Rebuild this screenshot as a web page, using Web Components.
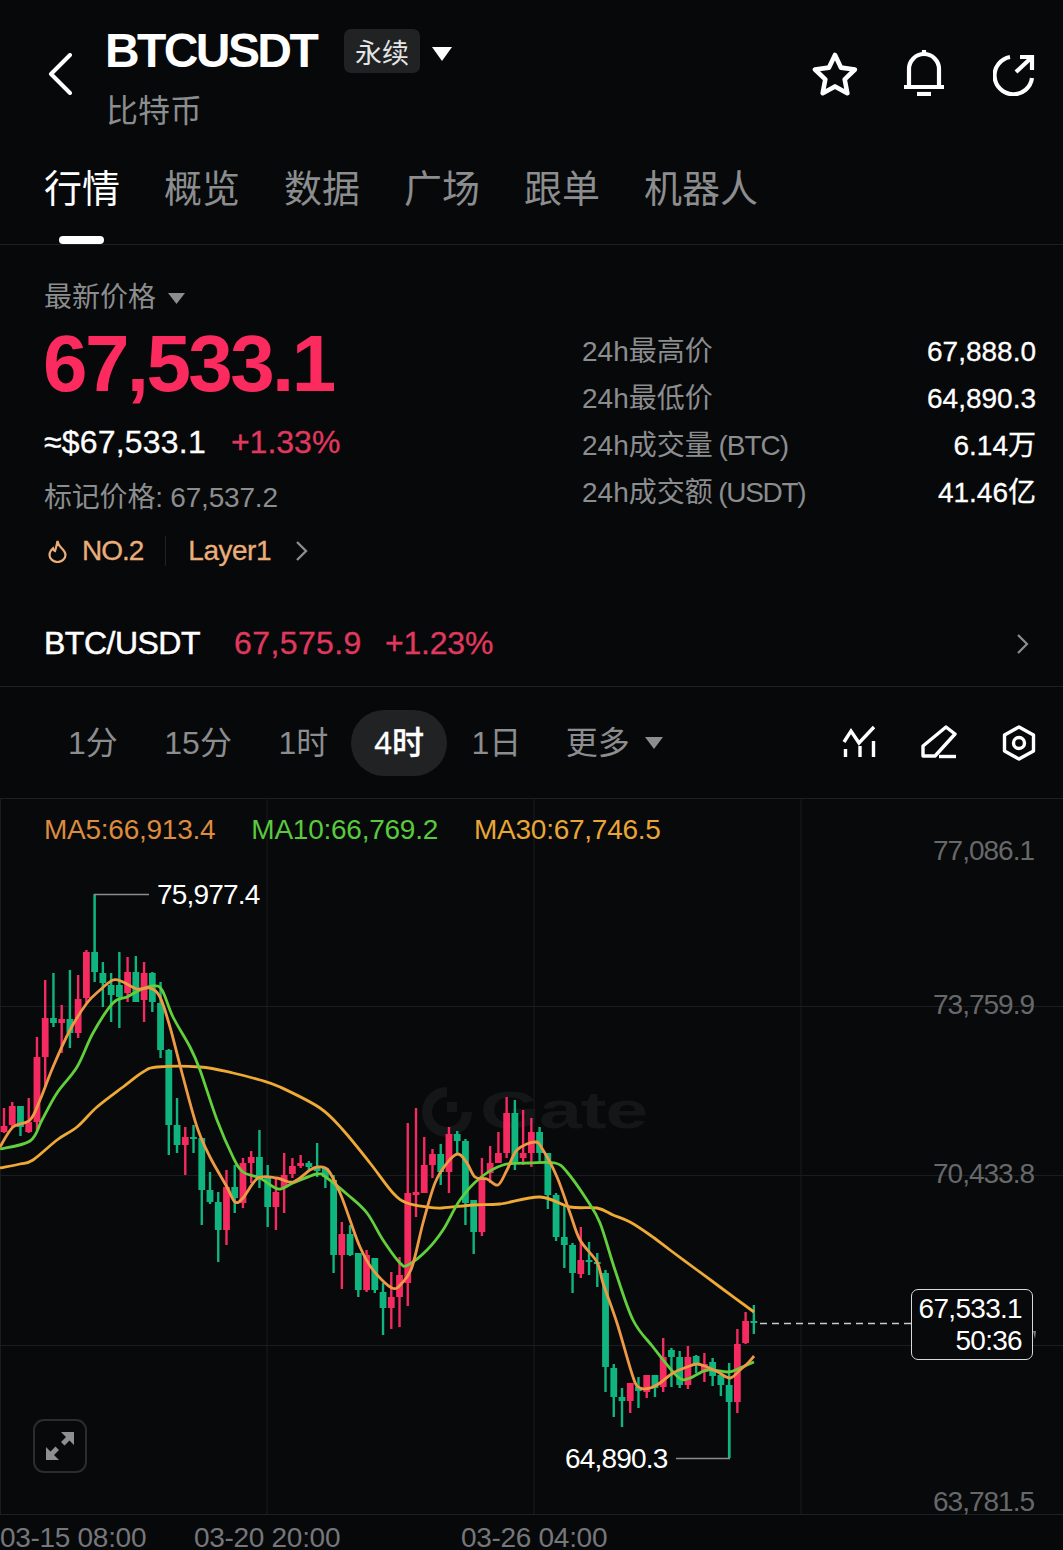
<!DOCTYPE html>
<html lang="zh">
<head>
<meta charset="utf-8">
<title>BTCUSDT</title>
<style>
  html, body { margin: 0; background: #070809; }
  body {
    width: 1063px;
    height: 1550px;
    overflow: hidden;
    display: flex;
    flex-direction: column;
    color: #fff;
    font-family: "Liberation Sans", "Noto Sans CJK SC", sans-serif;
  }
</style>
</head>
<body>
  <gt-header></gt-header>
  <gt-tabs></gt-tabs>
  <gt-price></gt-price>
  <gt-spot-row></gt-spot-row>
  <gt-intervals></gt-intervals>
  <gt-chart></gt-chart>
  <gt-time-axis></gt-time-axis>

<script>
class GtHeader extends HTMLElement {
  constructor() {
    super();
    this.attachShadow({ mode: "open" }).innerHTML = `
      <style>
        :host { display: flex; height: 150px; padding: 23px 28px 0 48px; box-sizing: border-box; flex: none; }
        .back { margin: 30px 34px 0 0; flex: none; }
        .title { display: flex; align-items: center; height: 56px; }
        .sym { font-size: 48px; font-weight: 700; letter-spacing: -2.6px; line-height: 56px; width: 239px; margin-left: -1px; }
        .badge { width: 76px; height: 44px; background: #202223; border-radius: 7px; color: #e4e5e6; font-size: 27px;
          display: flex; align-items: center; justify-content: center; }
        .caret { margin: 6px 0 0 12px; }
        .sub { font-size: 32px; color: #8b8d8f; line-height: 40px; margin-top: 12px; }
        .icons { margin-left: auto; display: flex; align-items: flex-start; gap: 47px; padding-top: 27px; }
        svg { display: block; }
      </style>
      <svg class="back" width="24" height="42" viewBox="0 0 24 42" fill="none" stroke="#fff" stroke-width="4" stroke-linecap="round" stroke-linejoin="round"><path d="M22 2 3 21l19 19"/></svg>
      <div>
        <div class="title">
          <span class="sym">BTCUSDT</span>
          <span class="badge">永续</span>
          <svg class="caret" width="20" height="14" viewBox="0 0 20 14"><path d="M0 0h20L10 14z" fill="#fff"/></svg>
        </div>
        <div class="sub">比特币</div>
      </div>
      <div class="icons">
        <svg style="margin:2px -1px 0 0" width="46" height="44" viewBox="0 0 46 44" fill="none" stroke="#fff" stroke-width="4.6" stroke-linejoin="round"><path d="M23 3l5.900 12.600 14 1.900-10.200 9.800 2.600 13.900L23 34.400l-12.300 6.800 2.600-13.900L3 17.500l14-1.900z"/></svg>
        <svg width="40" height="46" viewBox="0 0 40 46" fill="none" stroke="#fff" stroke-width="4.2"><path d="M5 36V19a15 15 0 0 1 30 0v17"/><path d="M0 37h40"/><path d="M20 0v5"/><path d="M13 44h14"/></svg>
        <svg style="margin:4px 0 0 2px" width="42" height="42" viewBox="993 54 42 42" fill="none" stroke="#fff" stroke-width="4.2"><path d="M1010 57a18.800 18.800 0 1 0 22 21"/><path d="M1016 72l15-14"/><path d="M1020 57h12v13"/></svg>
      </div>`;
  }
}

class GtTabs extends HTMLElement {
  constructor() {
    super();
    const names = ["行情", "概览", "数据", "广场", "跟单", "机器人"];
    this.attachShadow({ mode: "open" }).innerHTML = `
      <style>
        :host { display: flex; gap: 44px; height: 95px; padding-left: 44px; box-sizing: border-box; border-bottom: 1px solid #1f2022; flex: none; }
        span { font-size: 38px; line-height: 78px; color: #8b8d8f; position: relative; height: 94px; }
        .on { color: #fff; }
        .on::after { content: ""; position: absolute; left: 15px; width: 45px; height: 8px; bottom: 0; background: #fff; border-radius: 4px; }
      </style>
      ${names.map((n, i) => `<span class="${i ? "" : "on"}">${n}</span>`).join("")}`;
  }
}

class GtStat extends HTMLElement {
  constructor() {
    super();
    this.attachShadow({ mode: "open" }).innerHTML = `
      <style>
        :host { display: flex; justify-content: space-between; height: 47px; line-height: 47px; font-size: 28px; }
        .k { color: #8b8d8f; }
        .v { color: #fff; -webkit-text-stroke: .3px #fff; }
      </style>
      <span class="k"><slot name="k"></slot></span>
      <span class="v"><slot name="v"></slot></span>`;
  }
}

class GtPrice extends HTMLElement {
  constructor() {
    super();
    this.attachShadow({ mode: "open" }).innerHTML = `
      <style>
        :host { display: grid; grid-template-columns: 538px 1fr; padding: 35px 27px 30px 44px; flex: none; height: 354px; box-sizing: border-box; }
        .label { display: flex; align-items: center; gap: 12px; font-size: 28px; line-height: 36px; color: #8b8d8f; }
        .big { font-size: 80px; font-weight: 700; line-height: 84px; letter-spacing: -2.6px; color: #fb2b5f; margin: 6px 0 0 -1px; }
        .sub { display: flex; font-size: 32px; line-height: 40px; margin-top: 16px; -webkit-text-stroke: .3px; }
        .usd { letter-spacing: .2px; margin-right: 25px; }
        .chg { color: #e0395f; }
        .mark { font-size: 28px; line-height: 36px; color: #8b8d8f; margin-top: 18px; letter-spacing: -.2px; }
        .tag { display: flex; align-items: center; font-size: 28px; line-height: 36px; color: #eaae7a; margin-top: 17px; -webkit-text-stroke: .3px; }
        .no { letter-spacing: -1px; }
        .layer { letter-spacing: -.5px; }
        .sep { width: 1px; height: 30px; background: #222325; margin: 0 22px; }
        .stats { padding-top: 48px; }
        svg { display: block; flex: none; }
      </style>
      <div>
        <div class="label">最新价格<svg width="17" height="11" viewBox="0 0 17 11"><path d="M0 0h17L8.500 11z" fill="#8b8d8f"/></svg></div>
        <div class="big">67,533.1</div>
        <div class="sub"><span class="usd">≈$67,533.1</span><span class="chg">+1.33%</span></div>
        <div class="mark">标记价格: 67,537.2</div>
        <div class="tag">
          <svg style="margin:0 14px 0 3px" width="21" height="24" viewBox="0 0 21 24" fill="none" stroke="#eaae7a" stroke-width="2.2"><path d="M10.500 2c.5 4 2 5 4.500 7.500 2.300 2.300 3.500 4.300 3.500 6.500a8 7 0 0 1-16 0c0-3 1.700-5.200 3.500-6.800.4 1.600 1 2.300 2 2.800 1.200-3 1.700-6.500 2.500-10z"/></svg>
          <span class="no">NO.2</span><i class="sep"></i><span class="layer">Layer1</span>
          <svg style="margin-left:24px" width="13" height="22" viewBox="0 0 13 22" fill="none" stroke="#8b8d8f" stroke-width="2.4"><path d="M2 2l9 9-9 9"/></svg>
        </div>
      </div>
      <div class="stats">
        <gt-stat><span slot="k">24h最高价</span><span slot="v">67,888.0</span></gt-stat>
        <gt-stat><span slot="k">24h最低价</span><span slot="v">64,890.3</span></gt-stat>
        <gt-stat><span slot="k">24h成交量<span style="letter-spacing:-1px;word-spacing:-1px"> (BTC)</span></span><span slot="v">6.14万</span></gt-stat>
        <gt-stat><span slot="k">24h成交额<span style="letter-spacing:-1.300px;word-spacing:-1px"> (USDT)</span></span><span slot="v">41.46亿</span></gt-stat>
      </div>`;
  }
}

class GtSpotRow extends HTMLElement {
  constructor() {
    super();
    this.attachShadow({ mode: "open" }).innerHTML = `
      <style>
        :host { display: flex; align-items: center; height: 88px; padding: 2px 34px 0 44px; box-sizing: border-box; border-bottom: 1px solid #1f2022; font-size: 32px; flex: none; }
        .pair { color: #fff; -webkit-text-stroke: .5px #fff; width: 190px; letter-spacing: -.5px; }
        .px { color: #e0395f; width: 151px; letter-spacing: .4px; -webkit-text-stroke: .3px; }
        .chg { color: #e0395f; letter-spacing: -.2px; -webkit-text-stroke: .3px; }
        svg { margin-left: auto; }
      </style>
      <span class="pair">BTC/USDT</span><span class="px">67,575.9</span><span class="chg">+1.23%</span>
      <svg width="13" height="22" viewBox="0 0 13 22" fill="none" stroke="#8b8d8f" stroke-width="2.2"><path d="M2 2l9 9-9 9"/></svg>`;
  }
}

class GtIntervals extends HTMLElement {
  constructor() {
    super();
    const items = ["1分", "15分", "1时", "4时", "1日"];
    this.attachShadow({ mode: "open" }).innerHTML = `
      <style>
        :host { display: flex; align-items: center; height: 111px; padding: 0 27px 0 46px; box-sizing: border-box; flex: none; gap: 2.5px; }
        span { font-size: 32px; color: #8b8d8f; line-height: 66px; padding: 0 22px; border-radius: 33px; }
        .on { background: #202223; color: #fff; font-weight: 500; -webkit-text-stroke: .3px #fff; padding: 0 23px; margin-left: -1.500px; }
        .more { display: flex; align-items: center; gap: 15px; margin-left: -2px; }
        .tools { margin-left: auto; }
        svg { display: block; flex: none; }
      </style>
      ${items.map((t) => `<span class="${t === "4时" ? "on" : ""}">${t}</span>`).join("")}
      <span class="more">更多<svg width="18" height="12" viewBox="0 0 18 12"><path d="M0 0h18L9 12z" fill="#8b8d8f"/></svg></span>
      <svg class="tools" width="194" height="36" viewBox="842 726 194 36" fill="none" stroke="#fff" stroke-width="3.400">
        <path d="M844 743l7-11 8 12 15-16"/><path d="M845.500 750v8M860 747v11M873.500 742v16"/>
        <path stroke-linejoin="round" d="M946 728l9 7-20 22h-12v-10z"/><path d="M939 757.500h17"/>
        <path stroke-linejoin="round" d="M1019 728l14.500 8v16l-14.500 8-14.500-8v-16z"/><circle cx="1019" cy="744" r="5.500"/>
      </svg>`;
  }
}

// bar colour, wick top, wick bottom, body top, body bottom (page y)
const CANDLES = [
  "r 1108 1133 1126 1132","r 1102 1127 1106 1125","g 1106 1136 1106 1127","r 1098 1133 1122 1132","r 1037 1130 1057 1122",
  "r 980 1087 1018 1057","g 973 1027 1018 1023","r 1005 1053 1019 1023","g 970 1048 1019 1033","r 975 1038 999 1033",
  "r 950 1003 952 998","g 894 982 952 972","g 962 1007 973 983","g 973 1022 985 995","g 952 1028 985 997",
  "r 957 1002 972 993","g 956 1002 972 1002","r 962 1022 973 1000","g 972 1012 973 1002","g 982 1058 1003 1050",
  "g 1049 1155 1050 1125","g 1098 1153 1125 1145","r 1127 1175 1137 1145","g 1125 1153 1137 1138","g 1138 1225 1138 1190",
  "g 1172 1204 1190 1202","g 1192 1262 1202 1230","r 1170 1245 1187 1230","g 1165 1213 1187 1198","r 1158 1208 1163 1203",
  "r 1151 1183 1157 1163","g 1130 1188 1157 1178","g 1165 1227 1177 1207","r 1177 1230 1192 1207","r 1153 1213 1175 1187",
  "r 1158 1178 1166 1174","r 1155 1168 1163 1166","g 1161 1170 1163 1167","g 1143 1177 1168 1171","g 1167 1188 1168 1177",
  "g 1175 1273 1180 1255","r 1222 1289 1234 1255","g 1225 1256 1234 1255","g 1253 1297 1253 1290","r 1250 1292 1255 1290",
  "g 1258 1293 1258 1290","g 1283 1335 1292 1308","r 1272 1329 1297 1308","r 1257 1327 1275 1297","r 1123 1306 1193 1283",
  "r 1108 1217 1192 1195","r 1137 1193 1165 1193","r 1149 1178 1154 1165","g 1144 1185 1154 1172","r 1127 1193 1134 1172",
  "g 1131 1153 1134 1141","g 1139 1225 1141 1203","g 1200 1254 1200 1232","r 1158 1236 1180 1232","r 1146 1183 1163 1173",
  "r 1132 1163 1153 1163","r 1097 1158 1113 1153","g 1100 1170 1113 1163","r 1110 1165 1153 1158","r 1118 1167 1132 1153",
  "g 1127 1162 1132 1153","g 1153 1209 1153 1195","g 1193 1241 1195 1237","g 1205 1268 1237 1245","g 1243 1293 1245 1273",
  "r 1227 1278 1260 1274","g 1242 1275 1260 1261","g 1253 1287 1262 1263","g 1270 1392 1273 1367","g 1364 1417 1368 1397",
  "g 1388 1427 1397 1401","r 1383 1413 1383 1401","g 1377 1408 1387 1391","r 1375 1398 1375 1392","g 1375 1397 1375 1388",
  "r 1338 1392 1357 1387","g 1348 1387 1350 1357","g 1351 1388 1357 1385","r 1346 1389 1357 1385","g 1355 1373 1356 1365",
  "r 1353 1382 1364 1372","g 1358 1386 1362 1376","g 1373 1396 1375 1385","g 1363 1458 1385 1402","r 1329 1413 1344 1402",
  "r 1312 1344 1321 1343","g 1305 1334 1321 1322",
];

const MA5 = [[0,1147],[13,1127],[30,1120],[40,1100],[53,1067],[70,1030],[87,1003],[100,990],[113,980],[123,982],[137,989],[150,988],[160,997],[170,1027],[182,1073],[197,1127],[210,1157],[227,1187],[235,1202],[243,1198],[258,1178],[277,1178],[293,1182],[310,1170],[318,1167],[328,1170],[340,1193],[350,1220],[360,1247],[373,1270],[392,1288],[402,1283],[412,1267],[423,1223],[435,1183],[447,1163],[458,1154],[467,1163],[475,1177],[487,1179],[498,1185],[507,1170],[517,1150],[535,1142],[543,1150],[557,1177],[570,1213],[580,1240],[597,1262],[603,1283],[617,1323],[633,1377],[640,1388],[650,1388],[660,1383],[673,1373],[687,1367],[697,1364],[707,1367],[718,1372],[730,1378],[740,1370],[748,1363],[754,1356]];
const MA10 = [[0,1149],[30,1141],[42,1120],[57,1093],[77,1067],[93,1033],[113,1003],[127,997],[140,990],[153,986],[162,990],[173,1017],[190,1047],[200,1070],[217,1120],[233,1157],[243,1172],[260,1178],[278,1189],[293,1183],[317,1174],[327,1178],[348,1195],[367,1213],[383,1240],[400,1263],[408,1265],[427,1250],[443,1230],[460,1200],[480,1178],[503,1165],[530,1163],[555,1163],[567,1172],[587,1200],[600,1223],[615,1270],[633,1320],[653,1347],[678,1377],[690,1378],[707,1370],[728,1372],[740,1368],[754,1362]];
const MA30 = [[0,1168],[20,1164],[33,1160],[57,1140],[77,1127],[97,1107],[123,1087],[143,1072],[157,1067],[200,1067],[233,1073],[260,1080],[280,1087],[320,1108],[343,1130],[370,1163],[393,1193],[407,1203],[427,1207],[442,1208],[473,1205],[500,1204],[540,1197],[570,1207],[597,1208],[613,1215],[630,1222],[650,1235],[670,1250],[697,1270],[720,1287],[754,1312]];

// catmull-rom through the read-off points
function smoothPath(pts) {
  let d = `M${pts[0][0]} ${pts[0][1]}`;
  for (let i = 0; i < pts.length - 1; i++) {
    const p0 = pts[i - 1] || pts[i];
    const p1 = pts[i];
    const p2 = pts[i + 1];
    const p3 = pts[i + 2] || p2;
    const c1 = [p1[0] + (p2[0] - p0[0]) / 6, p1[1] + (p2[1] - p0[1]) / 6];
    const c2 = [p2[0] - (p3[0] - p1[0]) / 6, p2[1] - (p3[1] - p1[1]) / 6];
    d += `C${c1[0].toFixed(1)} ${c1[1].toFixed(1)} ${c2[0].toFixed(1)} ${c2[1].toFixed(1)} ${p2[0]} ${p2[1]}`;
  }
  return d;
}

function candleMarks() {
  return CANDLES.map((c, i) => {
    const [col, wt, wb, bt, bb] = c.split(" ");
    const x = 4 + i * 8.24;
    const fill = col === "r" ? "#f42a60" : "#10b47f";
    return `<rect x="${(x - 1.2).toFixed(2)}" y="${wt}" width="2.4" height="${wb - wt}" fill="${fill}"/>` +
      `<rect x="${(x - 3.4).toFixed(2)}" y="${bt}" width="6.8" height="${Math.max(bb - bt, 2)}" fill="${fill}"/>`;
  }).join("");
}

class GtChart extends HTMLElement {
  constructor() {
    super();
    this.attachShadow({ mode: "open" }).innerHTML = `
      <style>
        :host { display: block; position: relative; height: 717px; flex: none; background: #08090a; border-top: 1px solid #1f2022; border-bottom: 1px solid #1f2022; box-sizing: border-box; font-size: 28px; letter-spacing: -.8px; }
        svg.plot { position: absolute; left: 0; top: -1px; display: block; }
        .legend { position: relative; display: flex; gap: 36px; padding: 13px 0 0 44px; line-height: 36px; font-size: 28px; letter-spacing: -.25px; }
        .axis, .mark { position: absolute; line-height: 34px; white-space: nowrap; }
        .axis { right: 29px; color: #66686a; letter-spacing: -1px; }
        .mark { color: #fff; }
        .last { position: absolute; left: 911px; top: 490px; width: 122px; height: 71px; box-sizing: border-box; border: 1.5px solid #d8d9da; border-radius: 7px; background: #08090a;
          display: flex; flex-direction: column; align-items: flex-end; justify-content: center; padding-right: 10px; line-height: 32px; letter-spacing: -.7px; }
        .expand { position: absolute; left: 33px; top: 620px; width: 54px; height: 54px; box-sizing: border-box; border: 2px solid #2b2c2e; border-radius: 11px; }
        .expand svg { display: block; }
      </style>
      <svg class="plot" width="1063" height="716" viewBox="0 798 1063 716">
        <g stroke="#1b1c1e" stroke-width="1">
          <path d="M267 798v716M534 798v716M801 798v716M.5 798v716"/>
          <path d="M0 1006.500h1063M0 1175.500h1063M0 1345.500h1063"/>
        </g>
        <path d="M447 1092a20 20 0 1 0 20 20" fill="none" stroke="#151618" stroke-width="10"/>
        <rect x="447" y="1102" width="10" height="10" fill="#151618"/>
        <text x="480" y="1128" fill="#151618" font-family="Liberation Sans" font-weight="700" font-size="52" textLength="167" lengthAdjust="spacingAndGlyphs">Gate</text>
        ${candleMarks()}
        <path d="M94.500 952V894.500" stroke="#10b47f" stroke-width="1.500" fill="none"/>
        <path d="M94 894.500h55" stroke="#8b8d8f" stroke-width="1.500" fill="none"/>
        <path d="M729.500 1400v58" stroke="#10b47f" stroke-width="2" fill="none"/>
        <path d="M676 1458.500h54" stroke="#8b8d8f" stroke-width="1.500" fill="none"/>
        <path d="${smoothPath(MA30)}" fill="none" stroke="#eeaa35" stroke-width="2.800"/>
        <path d="${smoothPath(MA10)}" fill="none" stroke="#62d03c" stroke-width="2.800"/>
        <path d="${smoothPath(MA5)}" fill="none" stroke="#ee9a45" stroke-width="2.800"/>
        <path d="M760 1323.500h151" stroke="#c9cacb" stroke-width="1.500" stroke-dasharray="7 5" fill="none"/>
        <path d="M1033 1331l3 0-1 8z" fill="#77797b"/>
      </svg>
      <div class="legend">
        <span style="color:#dd8b3e">MA5:66,913.4</span>
        <span style="color:#59c93d">MA10:66,769.2</span>
        <span style="color:#e8a636">MA30:67,746.5</span>
      </div>
      <span class="axis" style="top:35px">77,086.1</span>
      <span class="axis" style="top:189px">73,759.9</span>
      <span class="axis" style="top:358px">70,433.8</span>
      <span class="axis" style="top:686px">63,781.5</span>
      <span class="mark" style="left:157px;top:79px">75,977.4</span>
      <span class="mark" style="left:565px;top:643px">64,890.3</span>
      <div class="last"><span>67,533.1</span><span>50:36</span></div>
      <div class="expand">
        <svg width="50" height="50" viewBox="0 0 50 50" fill="#8d8f91"><path d="M26 11h13v13l-4.500-4.500-5 5-3.500-3.500 5-5z"/><path d="M24 39H11V26l4.500 4.500 5-5 3.500 3.500-5 5z"/></svg>
      </div>`;
  }
}

class GtTimeAxis extends HTMLElement {
  constructor() {
    super();
    this.attachShadow({ mode: "open" }).innerHTML = `
      <style>
        :host { display: grid; grid-template-columns: 194px 267px 1fr; height: 35px; font-size: 28px; line-height: 24px; align-items: end; color: #75777a; flex: none; letter-spacing: -.3px; }
      </style>
      <span>03-15 08:00</span><span>03-20 20:00</span><span>03-26 04:00</span>`;
  }
}

customElements.define("gt-header", GtHeader);
customElements.define("gt-tabs", GtTabs);
customElements.define("gt-stat", GtStat);
customElements.define("gt-price", GtPrice);
customElements.define("gt-spot-row", GtSpotRow);
customElements.define("gt-intervals", GtIntervals);
customElements.define("gt-chart", GtChart);
customElements.define("gt-time-axis", GtTimeAxis);
</script>
</body>
</html>
